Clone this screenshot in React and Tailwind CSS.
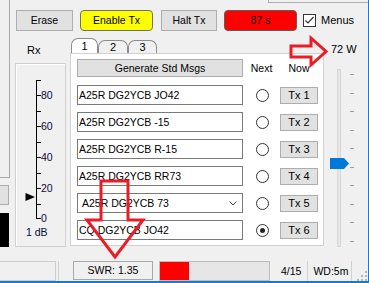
import React from 'react';

const msgs = [
    'A25R DG2YCB JO42',
    'A25R DG2YCB -15',
    'A25R DG2YCB R-15',
    'A25R DG2YCB RR73',
    'A25R DG2YCB 73',
    'CQ DG2YCB JO42',
];

const Radio = ({ checked }) => (
    <div className="w-[13px] h-[13px] rounded-full border border-[#333] bg-white flex items-center justify-center">
        {checked && <div className="w-[5px] h-[5px] rounded-full bg-[#222]" />}
    </div>
);

// Rx level meter scale
const Meter = () => {
    const majors = [[31, '80'], [62, '60'], [93, '40'], [124, '20'], [154, '0']];
    const minors = [16, 47, 78, 109, 140];
    return (
        <svg width="49" height="182" className="block">
            <line x1="20.5" y1="16" x2="20.5" y2="154.5" stroke="#000" />
            {minors.map(y => (
                <line key={y} x1="20" y1={y + 0.5} x2="25" y2={y + 0.5} stroke="#000" />
            ))}
            {majors.map(([y, t]) => (
                <g key={t}>
                    <line x1="20" y1={y + 0.5} x2="25" y2={y + 0.5} stroke="#000" />
                    <text x="25" y={y + 4} fontSize="10.5" fill="#0a0a3a" fontFamily="Liberation Sans, Arial, sans-serif">{t}</text>
                </g>
            ))}
            <polygon points="9.5,129 19,133 9.5,137" fill="#000" />
            <text x="10" y="172" fontSize="10.5" fill="#0a0a3a" fontFamily="Liberation Sans, Arial, sans-serif">1 dB</text>
        </svg>
    );
};

export default function App() {
    return (
        <div className="w-[369px] h-[283px] bg-[#f0f0f0] relative overflow-hidden flex flex-col border-r border-b-2 border-[#1c78cc] font-['Liberation_Sans',Arial,sans-serif] text-[10.5px] text-black leading-none">
            <div className="flex h-[247px]">
                {/* left strip */}
                <div className="w-[10px] flex flex-col">
                    <div className="h-[178px] w-[10px] border-r border-b border-[#a8a8a8]" />
                    <div className="mt-[7px] h-[20px] w-[9px] bg-[#e1e1e1] border border-l-0 border-[#adadad]" />
                    <div className="mt-[8px] h-[34px] w-[9px] bg-black" />
                </div>

                <div className="flex-1 flex flex-col">
                    <div className="flex h-[3px]">
                        <div className="ml-auto w-[100px] h-[3px] border-l border-b border-[#adadad]" />
                    </div>

                    {/* top buttons */}
                    <div className="mt-[7px] h-[21px] flex items-center pl-[6px]">
                        <div className="w-[57px] h-[21px] bg-[#e1e1e1] border border-[#adadad] flex items-center justify-center">Erase</div>
                        <div className="ml-[7px] w-[73px] h-[21px] bg-[#ffff00] border border-[#6f6f6f] rounded-[4px] flex items-center justify-center">Enable Tx</div>
                        <div className="ml-[8px] w-[56px] h-[21px] bg-[#e1e1e1] border border-[#adadad] flex items-center justify-center">Halt Tx</div>
                        <div className="ml-[7px] w-[73px] h-[21px] bg-[#ff0000] border border-[#5e5e5e] rounded-[4px] flex items-center justify-center">87 s</div>
                        <div className="ml-[6px] w-[13px] h-[13px] border border-[#333] bg-white flex items-center justify-center">
                            <svg width="11" height="11" viewBox="0 0 11 11">
                                <path d="M1.5 5.5 L4 8 L9.5 2" fill="none" stroke="#333" strokeWidth="1.2" />
                            </svg>
                        </div>
                        <span className="ml-[5px] text-[11px]">Menus</span>
                    </div>

                    <div className="flex flex-1">
                        {/* Rx meter */}
                        <div className="ml-[5px] w-[51px] flex flex-col">
                            <div className="mt-[14px] pl-[12px] h-[11px] text-[11px]">Rx</div>
                            <div className="mt-[7px] h-[184px] border border-[#cfcfcf] shadow-[inset_1px_1px_0_#fff]">
                                <Meter />
                            </div>
                        </div>

                        {/* tab widget */}
                        <div className="ml-[4px] w-[254px] flex flex-col">
                            <div className="mt-[7px] h-[15px] flex items-end pl-[1px]">
                                <div className="w-[27px] h-[15px] bg-white border border-b-0 border-[#8c8c8c] rounded-t-[7px] flex items-center justify-center text-[11px]">1</div>
                                <div className="w-[30px] h-[13px] border border-b-0 border-[#8c8c8c] rounded-t-[7px] flex items-center justify-center text-[11px]">2</div>
                                <div className="w-[29px] h-[13px] border border-b-0 border-[#8c8c8c] rounded-t-[7px] flex items-center justify-center text-[11px]">3</div>
                            </div>
                            <div className="h-[193px] bg-white border border-[#d2d2d2] pl-[6px] pt-[5px]">
                                <div className="flex items-center h-[18px]">
                                    <div className="w-[166px] h-[18px] bg-[#e1e1e1] border border-[#adadad] flex items-center justify-center">Generate Std Msgs</div>
                                    <div className="w-[37px] text-center">Next</div>
                                    <div className="w-[38px] text-center">Now</div>
                                </div>
                                <div className="mt-[8px] flex flex-col gap-[7px]">
                                    {msgs.map((m, i) => (
                                        <div key={i} className="flex items-center h-[20px]">
                                            <div className={`w-[166px] h-[20px] border border-[#7a7a7a] bg-white flex items-center ${i === 4 ? 'pl-[4px]' : 'pl-[1px]'}`}>
                                                <span className="flex-1">{m}</span>
                                                {i === 4 && (
                                                    <svg width="8" height="5" viewBox="0 0 8 5" className="mr-[5px]">
                                                        <path d="M0.5 0.5 L4 4 L7.5 0.5" fill="none" stroke="#444" />
                                                    </svg>
                                                )}
                                            </div>
                                            <div className="w-[37px] flex justify-center pl-[1px]">
                                                <Radio checked={i === 5} />
                                            </div>
                                            <div className="w-[38px] h-[17px] bg-[#e1e1e1] border border-[#adadad] flex items-center justify-center text-[11px]">Tx {i + 1}</div>
                                        </div>
                                    ))}
                                </div>
                            </div>
                        </div>

                        {/* power slider */}
                        <div className="flex-1 flex flex-col">
                            <div className="mt-[13px] pl-[7px] h-[11px] text-[11px]">72 W</div>
                            <div className="mt-[14px] flex-1 relative">
                                <div className="absolute left-[13px] top-0 bottom-0 w-[4px] bg-[#e7e7e7] border border-[#d6d6d6]" />
                                <div className="absolute left-[26px] top-[5px] bottom-[5px] flex flex-col justify-between">
                                    {Array.from({ length: 10 }).map((_, i) => (
                                        <div key={i} className="w-[4px] h-px bg-[#9a9a9a]" />
                                    ))}
                                </div>
                                <svg width="20" height="12" className="absolute left-[6px] top-[89px]">
                                    <polygon points="0,0 14,0 19,5.5 14,11 0,11" fill="#0078d7" />
                                </svg>
                            </div>
                        </div>
                    </div>
                </div>
            </div>

            {/* status bar */}
            <div className="flex-1 flex items-start pt-[14px]">
                <div className="w-[56px] h-[20px] border border-l-0 border-[#cdcdcd]" />
                <div className="ml-[2px] w-px h-[20px] bg-[#d0d0d0]" />
                <div className="ml-[14px] w-[80px] h-[19px] border border-[#a8a8a8] flex items-center justify-center">SWR: 1.35</div>
                <div className="ml-[6px] w-[111px] h-[20px] bg-[#e6e6e6] border border-[#bcbcbc] flex">
                    <div className="w-[29px] h-full bg-[#ff0000]" />
                </div>
                <div className="ml-[11px] h-[20px] flex items-center">4/15</div>
                <div className="ml-[6px] w-px h-[20px] bg-[#d0d0d0]" />
                <div className="ml-[5px] h-[20px] flex items-center">WD:5m</div>
                <div className="ml-[3px] w-px h-[20px] bg-[#d0d0d0]" />
                <svg width="10" height="10" className="ml-[5px] mt-[10px]">
                    {[[8, 0], [8, 4], [4, 4], [8, 8], [4, 8], [0, 8]].map(([x, y], i) => (
                        <rect key={i} x={x} y={y} width="2" height="2" fill="#b5b5b5" />
                    ))}
                </svg>
            </div>

            {/* red annotation arrows */}
            <svg width="369" height="283" className="absolute left-0 top-0 pointer-events-none">
                <polygon points="291,46 311,46 311,38 326,51.5 311,65 311,57 291,57" fill="none" stroke="#ec1c24" strokeWidth="3" strokeLinejoin="miter" />
                <polygon points="101,181 128,181 128,220 143,220 115,257 87,220 101,220" fill="none" stroke="#ec1c24" strokeWidth="3" strokeLinejoin="miter" />
            </svg>
        </div>
    );
}
